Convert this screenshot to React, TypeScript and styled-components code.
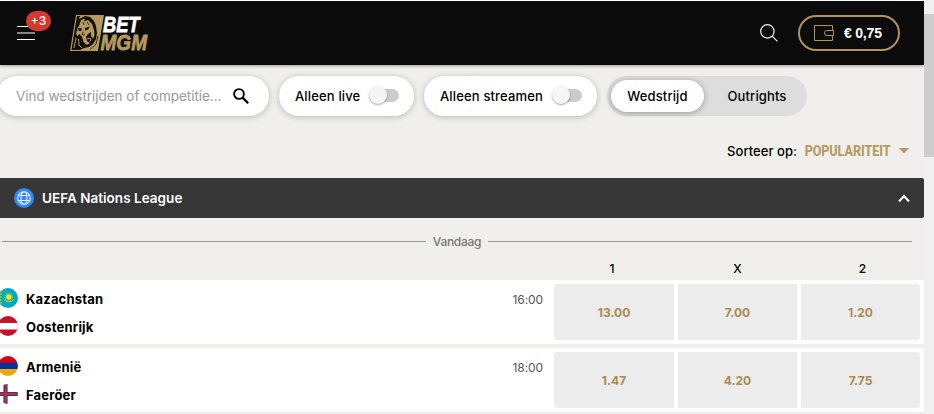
import React from 'react';
import styled, { createGlobalStyle } from 'styled-components';

const GlobalStyle = createGlobalStyle`
  * { box-sizing: border-box; }
  html, body { margin: 0; padding: 0; overflow: hidden; }
  body { background: #f0efeb; font-family: Inter, "Liberation Sans", sans-serif; color: #000; }
  button { font: inherit; color: inherit; border: 0; padding: 0; background: none; }
  svg { display: block; flex: none; overflow: visible; }
`;

const Screen = styled.div`
  display: flex;
  width: 934px;
  height: 414px;
  overflow: hidden;
`;

const Page = styled.div`
  width: 924px;
  flex: none;
`;

const ScrollTrack = styled.div`
  width: 10px;
  background: #f0f0f0;
  padding-top: 14px;
`;

const ScrollThumb = styled.div`
  height: 143px;
  background: #cdcdcd;
`;

const Text = styled.span<{ $size?: number; $weight?: number; $spacing?: number; $color?: string; $family?: string }>`
  display: block;
  white-space: nowrap;
  font-size: ${(p) => p.$size ?? 13}px;
  font-weight: ${(p) => p.$weight ?? 500};
  letter-spacing: ${(p) => p.$spacing ?? 0}px;
  color: ${(p) => p.$color ?? '#000'};
  ${(p) => p.$family && `font-family: ${p.$family};`}
`;

const Header = styled.header`
  display: flex;
  align-items: center;
  height: 65px;
  padding: 0 24px 0 16px;
  background: #0b0b0b;
  border-top: 1px solid #fff;
  box-shadow: 0 1px 3px rgba(0, 0, 0, 0.35);
`;

const MenuButton = styled.button`
  position: relative;
  width: 54px;
  height: 36px;
  padding: 0 0 0 1px;
`;

const CountBadge = styled.span`
  position: absolute;
  left: 10px;
  top: -4px;
  width: 25px;
  height: 20px;
  border-radius: 10px;
  background: #d63a2f;
  color: #fff;
  font-size: 12px;
  font-weight: 500;
  line-height: 19px;
  text-align: center;
`;

const HeaderRight = styled.div`
  display: flex;
  align-items: center;
  gap: 20px;
  margin-left: auto;
`;

const Wallet = styled.button`
  display: flex;
  align-items: center;
  gap: 10px;
  width: 102px;
  height: 36px;
  padding-left: 14px;
  border: 2px solid #b1935b;
  border-radius: 18px;
`;

const Filters = styled.div`
  display: flex;
  gap: 10px;
  height: 40px;
  margin: 11px 0 0 -3px;
`;

const Pill = styled.div<{ $width: number; $left?: number; $right?: number }>`
  display: flex;
  align-items: center;
  width: ${(p) => p.$width}px;
  flex: none;
  padding: 0 ${(p) => p.$right ?? 15}px 0 ${(p) => p.$left ?? 16}px;
  justify-content: space-between;
  border-radius: 20px;
  background: #fff;
  box-shadow: 0 1px 6px rgba(0, 0, 0, 0.24);
`;

const Toggle = styled.div`
  display: flex;
  align-items: center;
  width: 30px;
  height: 13px;
  margin-top: -2px;
  border-radius: 7px;
  background: #cbcbcb;
`;

const Knob = styled.div`
  width: 18px;
  height: 18px;
  flex: none;
  border-radius: 50%;
  background: #f5f5f5;
  box-shadow: 0 1px 2px rgba(0, 0, 0, 0.35);
`;

const Segments = styled.div`
  display: flex;
  width: 200px;
  padding: 4px;
  border-radius: 20px;
  background: #ddd;
`;

const Segment = styled.button<{ $active?: boolean }>`
  display: flex;
  align-items: center;
  justify-content: center;
  width: ${(p) => (p.$active ? 93 : 106)}px;
  flex: none;
  border-radius: 16px;
  background: ${(p) => (p.$active ? '#fff' : 'transparent')};
  box-shadow: ${(p) => (p.$active ? '0 1px 6px rgba(0,0,0,.32)' : 'none')};
`;

const SortBar = styled.div`
  display: flex;
  align-items: center;
  justify-content: flex-end;
  height: 62px;
  padding: 8px 15px 0 0;
  gap: 8px;
`;

const SortValue = styled.div`
  display: flex;
  justify-content: flex-end;
  width: 86px;
  font: 800 14px Roboto, sans-serif;
  color: #b69960;
`;

const Condensed = styled.span`
  flex: none;
  transform: scaleX(0.89);
  transform-origin: right center;
`;

const LeagueBar = styled.div`
  display: flex;
  align-items: center;
  gap: 8px;
  height: 40px;
  padding: 0 14px;
  border-radius: 0 2px 2px 0;
  background: #363636;
`;

const LeagueChevron = styled.div`
  margin-left: auto;
`;

const DayDivider = styled.div`
  display: flex;
  align-items: center;
  gap: 7px;
  height: 47px;
  padding: 0 12px 0 2px;
`;

const Rule = styled.div`
  flex: 1;
  height: 1px;
  background: #96958f;
`;

const OddsGrid = styled.div`
  display: grid;
  grid-template-columns: 120px 119px 119px;
  gap: 4px;
`;

const ColumnHeads = styled.div`
  display: flex;
  justify-content: flex-end;
  align-items: flex-start;
  height: 15px;
  padding-right: 4px;
`;

const ColumnHead = styled.div`
  height: 15px;
  margin-top: -4px;
  text-align: center;
  font-size: 12px;
  font-weight: 500;
  line-height: 15px;

  &:first-child { padding-right: 4px; }
  &:last-child { padding-left: 4px; }
`;

const MatchRow = styled.section`
  display: flex;
  height: 64px;
  margin-bottom: 4px;
  padding: 4px 4px 4px 0;
  background: #fff;
`;

const Teams = styled.div`
  display: flex;
  flex-direction: column;
  gap: 8px;
  padding-top: 4px;
  margin-left: -2px;
`;

const Team = styled.div`
  display: flex;
  align-items: center;
  gap: 8px;
  height: 20px;
`;

const TeamName = styled.span`
  padding-top: 2px;
  font-size: 13px;
  font-weight: 650;
  letter-spacing: 0.18px;
  white-space: nowrap;
`;

const Kickoff = styled.div`
  margin: 8px 11px 0 auto;
`;

const Odd = styled.button<{ $corner?: 'left' | 'right' }>`
  height: 56px;
  background: #ececec;
  border-radius: ${(p) => (p.$corner === 'left' ? '4px 0 0 4px' : p.$corner === 'right' ? '0 4px 4px 0' : '0')};
  color: #a98a4f;
  font-size: 12px;
  font-weight: 700;
  padding-top: 1px;
`;

const Logo = () => (
  <svg width="80" height="38" viewBox="0 0 80 38">
    <path d="M6 1H34L28 37H0Z" fill="#b69960" />
    <path d="M7 2L10 2L9 5L15 2L20 3L24 7L26 12L27 19L26 25L23 30L19 33L14 34L10 36H1.500L4 20Z" fill="#11100d" />
    <path d="M11 6L15 4.500L14 7.500L18 6L22 10L24 16L24.500 21L23 25L21 22L21 18L18 20L16 23L17 27L20 29L17 31L13.500 28L12 23L9.500 20L7.500 22L6 20L7.500 14L9 12Z" fill="#b69960" />
    <path d="M8 14L12 14.500L11 17L8.500 17ZM15 14L20 12.500L18 15.500L15 16.500Z" fill="#11100d" />
    <path d="M13 8L14 11M17 8L19 11M13 17.500L12.500 21L15 20.500" stroke="#11100d" strokeWidth="0.8" fill="none" />
    <path d="M6 24L4 34M8.500 25L9 31L12 34M17 25L20 24L21 26L19.500 27.500" fill="none" stroke="#b69960" strokeWidth="1" />
    <path d="M28 22L26 30L20 35.500" fill="none" stroke="#11100d" strokeWidth="0.8" />
    <g fontFamily="'Liberation Sans', sans-serif" fontWeight="700" fontStyle="italic" fontSize="22.5" strokeWidth="0.8">
      <text x="33" y="18" fill="#fff" stroke="#fff" textLength="36.500" lengthAdjust="spacingAndGlyphs">BET</text>
      <text x="30.500" y="36" fill="#b69960" stroke="#b69960" textLength="46.500" lengthAdjust="spacingAndGlyphs">MGM</text>
    </g>
  </svg>
);

const MenuIcon = () => (
  <svg width="18" height="14" viewBox="0 0 18 14">
    <path d="M0 .5H18M0 13.5H18" stroke="#fff" />
    <path d="M0 7H18" stroke="#858585" strokeWidth="2" />
  </svg>
);

const ThinSearch = () => (
  <svg width="18" height="18" viewBox="0 0 18 18" fill="none" stroke="#f4f4f4" strokeWidth="1.2">
    <circle cx="7.4" cy="7.4" r="6.7" />
    <path d="M12.2 12.2L17.4 17.4" />
  </svg>
);

const BoldSearch = () => (
  <svg width="16" height="16" viewBox="0 0 16 16" fill="none" stroke="#000" strokeWidth="1.9">
    <circle cx="6" cy="6" r="4.9" />
    <path d="M9.6 9.6L15.2 15.2" strokeWidth="2.2" />
  </svg>
);

const WalletIcon = () => (
  <svg width="20" height="16" viewBox="0 0 20 16" fill="none" stroke="#b1935b">
    <path d="M18.5 5V.5H.5V15.500H18.500V11" />
    <path d="M19.500 5.500H13A2.500 2.500 0 0 0 13 10.500H19.500Z" />
  </svg>
);

const GlobeIcon = () => (
  <svg width="20" height="20" viewBox="0 0 20 20">
    <circle cx="10" cy="10" r="10" fill="#3388f5" />
    <g fill="none" stroke="#e6f0fd" strokeWidth="1.100">
      <circle cx="10" cy="10" r="6.300" />
      <ellipse cx="10" cy="10" rx="3" ry="6.300" />
      <path d="M4.700 7.500H15.300M4.700 12.500H15.300" />
    </g>
  </svg>
);

type Country = 'kz' | 'at' | 'am' | 'fo';

const flags: Record<Country, React.ReactNode> = {
  kz: (
    <>
      <path d="M0 0H20V20H0Z" fill="#00abc2" />
      <path d="M3 2V18" stroke="#9cbf55" strokeWidth="1.600" strokeDasharray="2 1" />
      <circle cx="10.800" cy="9" r="3.800" fill="none" stroke="#a8c552" strokeWidth="1.200" strokeDasharray="1 .8" />
      <circle cx="10.800" cy="9" r="2.700" fill="#ffe600" />
      <path d="M5.500 11Q7 14.500 10.800 14.200Q14.600 14.500 16 11Q14 13.500 10.800 13.200Q7.500 13.500 5.500 11Z" fill="#b5c944" />
    </>
  ),
  at: (
    <>
      <path d="M0 0H20V20H0Z" fill="#c8102e" />
      <path d="M0 7H20V13.500H0Z" fill="#fff" />
    </>
  ),
  am: (
    <>
      <path d="M0 0H20V7H0Z" fill="#d90012" />
      <path d="M0 6.700H20V13.300H0Z" fill="#0033a0" />
      <path d="M0 13.300H20V20H0Z" fill="#f2a800" />
    </>
  ),
  fo: (
    <>
      <path d="M0 0H20V20H0Z" fill="#fff" />
      <path d="M7.500 0V20M0 10H20" stroke="#17458f" strokeWidth="4.200" />
      <path d="M7.500 0V20M0 10H20" stroke="#e0202e" strokeWidth="2" />
    </>
  ),
};

const Flag = ({ country }: { country: Country }) => (
  <svg width="20" height="20" viewBox="0 0 20 20">
    <clipPath id={`flag-${country}`}><circle cx="10" cy="10" r="10" /></clipPath>
    <g clipPath={`url(#flag-${country})`}>{flags[country]}</g>
  </svg>
);

const matches: { time: string; teams: { name: string; country: Country }[]; odds: string[] }[] = [
  { time: '16:00', teams: [{ name: 'Kazachstan', country: 'kz' }, { name: 'Oostenrijk', country: 'at' }], odds: ['13.00', '7.00', '1.20'] },
  { time: '18:00', teams: [{ name: 'Armenië', country: 'am' }, { name: 'Faeröer', country: 'fo' }], odds: ['1.47', '4.20', '7.75'] },
];

export default function App() {
  return (
    <>
      <GlobalStyle />
      <Screen>
        <Page>
          <Header>
            <MenuButton aria-label="Menu"><MenuIcon /><CountBadge>+3</CountBadge></MenuButton>
            <Logo />
            <HeaderRight>
              <ThinSearch />
              <Wallet>
                <WalletIcon />
                <Text $size={14} $weight={700} $color="#fff" $family="'Liberation Sans', sans-serif" $spacing={-0.2}>€ 0,75</Text>
              </Wallet>
            </HeaderRight>
          </Header>

          <Filters>
            <Pill $width={272} $left={19} $right={20}>
              <Text $color="#999" $weight={400} $size={13.5} $spacing={-0.03}>Vind wedstrijden of competitie...</Text>
              <BoldSearch />
            </Pill>
            <Pill $width={135}><Text $spacing={0.15}>Alleen live</Text><Toggle><Knob /></Toggle></Pill>
            <Pill $width={173}><Text $spacing={0.15}>Alleen streamen</Text><Toggle><Knob /></Toggle></Pill>
            <Segments>
              <Segment $active><Text $spacing={0.12}>Wedstrijd</Text></Segment>
              <Segment><Text $spacing={0.12}>Outrights</Text></Segment>
            </Segments>
          </Filters>

          <SortBar>
            <Text $spacing={0.05}>Sorteer op:</Text>
            <SortValue><Condensed>POPULARITEIT</Condensed></SortValue>
            <svg width="10" height="6" viewBox="0 0 10 6"><path d="M0 0H10L5 5.500Z" fill="#b69960" /></svg>
          </SortBar>

          <LeagueBar>
            <GlobeIcon />
            <Text $color="#fff" $weight={600} $size={13.5} $spacing={0.03}>UEFA Nations League</Text>
            <LeagueChevron>
              <svg width="12" height="9" viewBox="0 0 12 9"><path d="M1 7.500L6 2L11 7.500" fill="none" stroke="#fff" strokeWidth="2" /></svg>
            </LeagueChevron>
          </LeagueBar>

          <DayDivider><Rule /><Text $size={12} $color="#777671" $spacing={-0.3}>Vandaag</Text><Rule /></DayDivider>

          <ColumnHeads>
            <OddsGrid>{['1', 'X', '2'].map((h) => <ColumnHead key={h}>{h}</ColumnHead>)}</OddsGrid>
          </ColumnHeads>

          {matches.map((m) => (
            <MatchRow key={m.time}>
              <Teams>
                {m.teams.map((t) => (
                  <Team key={t.name}><Flag country={t.country} /><TeamName>{t.name}</TeamName></Team>
                ))}
              </Teams>
              <Kickoff><Text $size={12} $weight={400} $color="#555" $spacing={-0.1}>{m.time}</Text></Kickoff>
              <OddsGrid>
                {m.odds.map((o, i) => (
                  <Odd key={o} $corner={i === 0 ? 'left' : i === 2 ? 'right' : undefined}>{o}</Odd>
                ))}
              </OddsGrid>
            </MatchRow>
          ))}
        </Page>
        <ScrollTrack><ScrollThumb /></ScrollTrack>
      </Screen>
    </>
  );
}
